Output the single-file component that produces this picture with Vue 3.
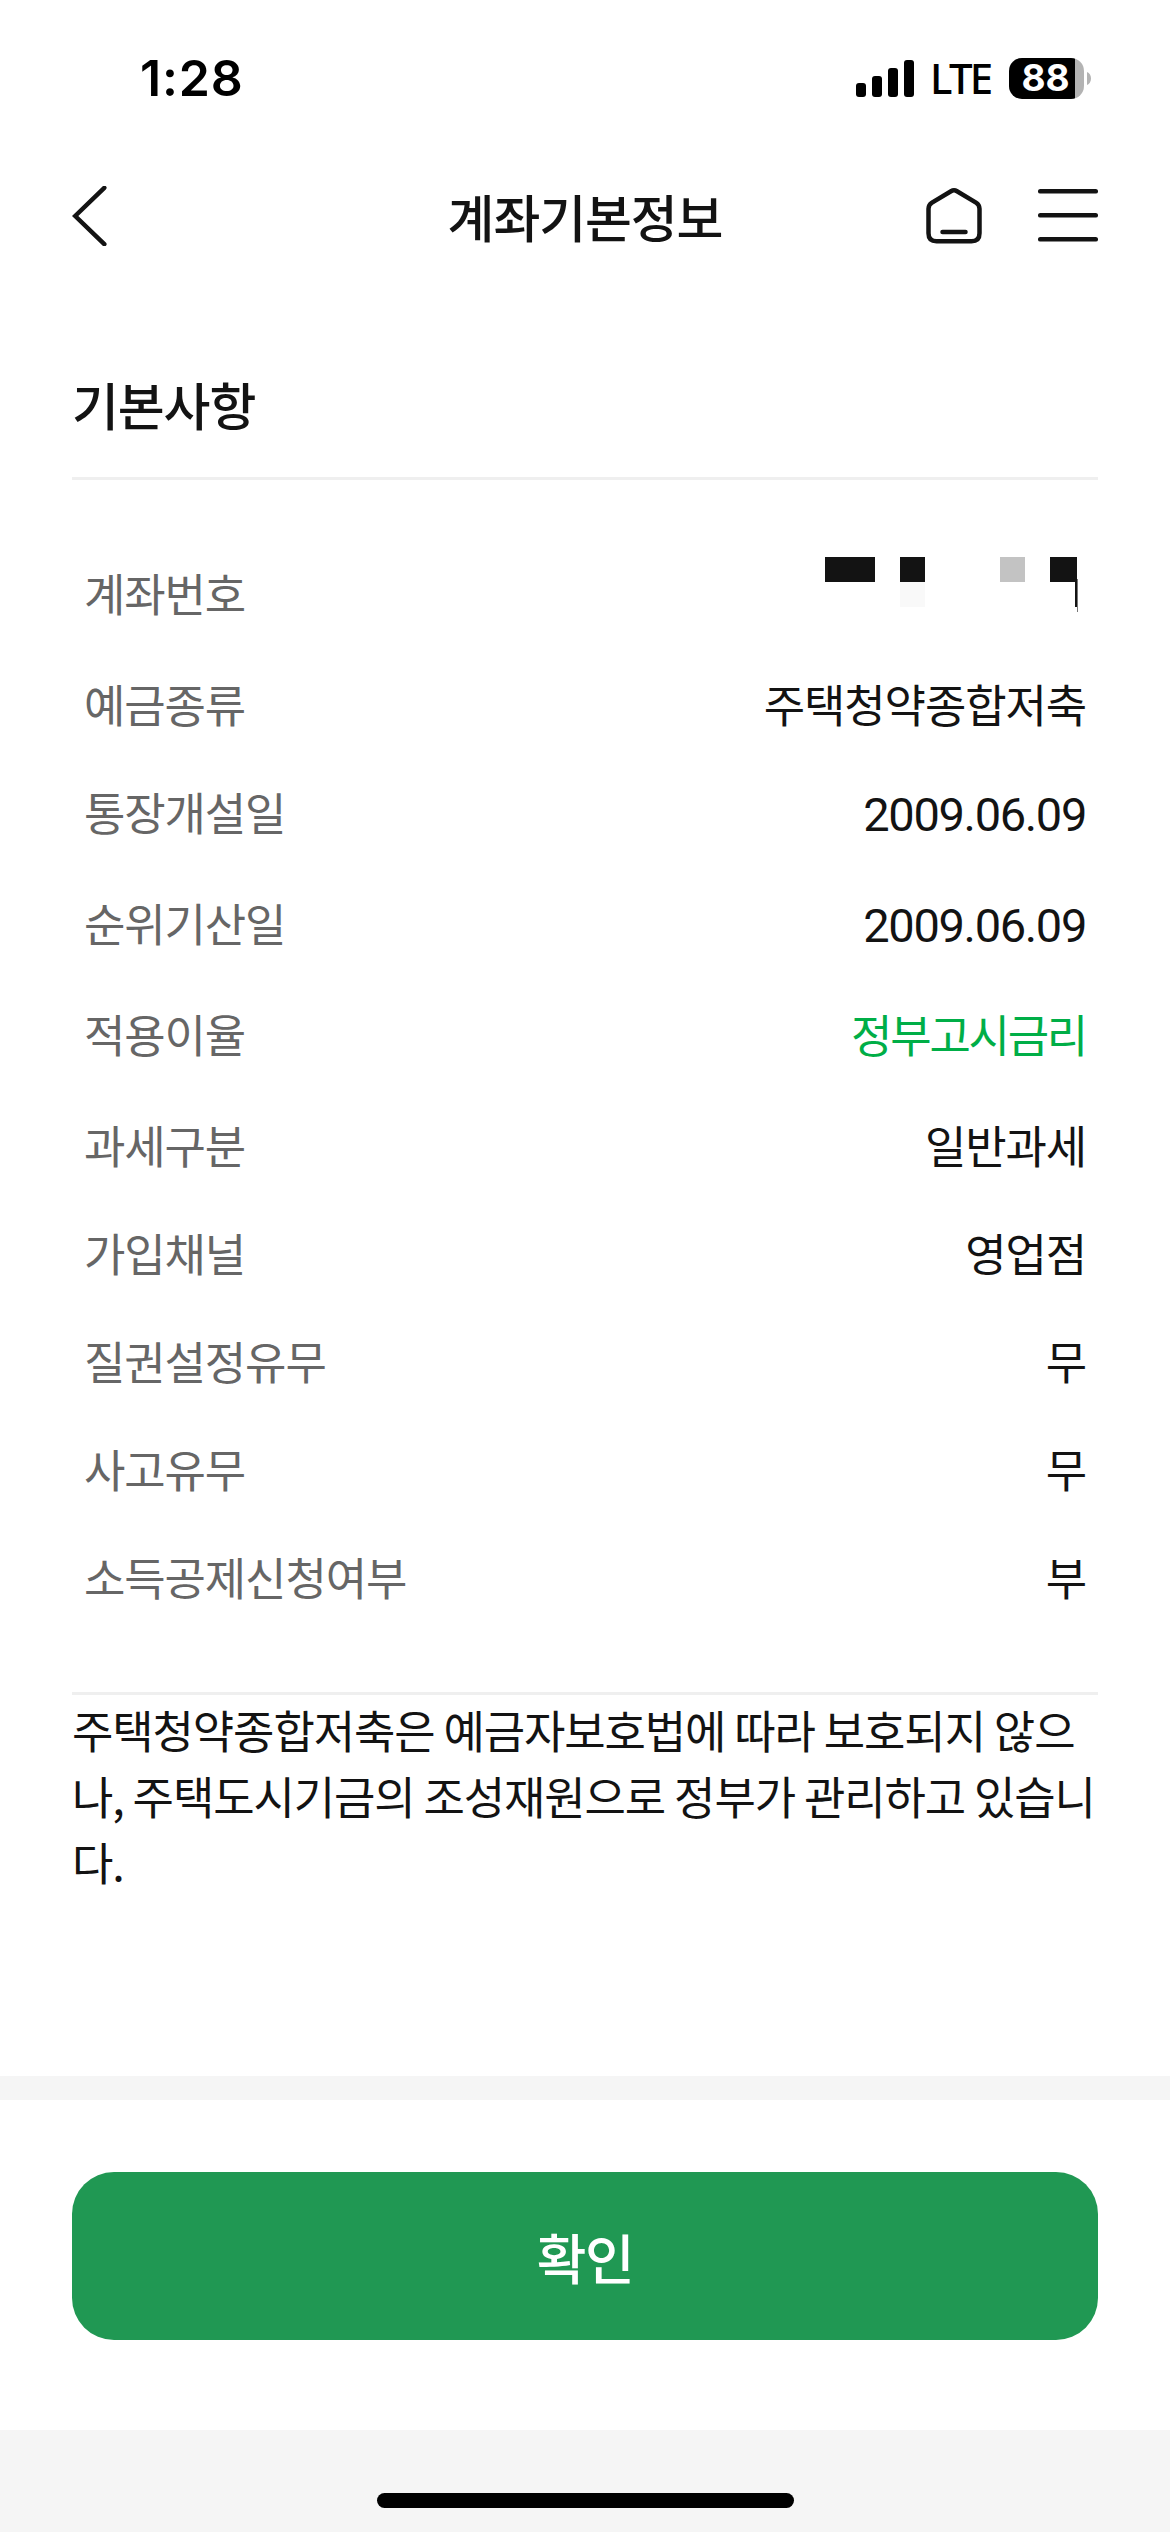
<template>
  <div class="screen">
    <div class="status-bar">
      <span class="status-time">1:28</span>
      <div class="status-right">
        <svg class="signal" width="58" height="37" viewBox="0 0 58 37">
          <rect x="0" y="23" width="10" height="14" rx="3" />
          <rect x="16" y="16" width="10" height="21" rx="3" />
          <rect x="32" y="8" width="10" height="29" rx="3" />
          <rect x="48" y="0" width="10" height="37" rx="3" />
        </svg>
        <span class="network">LTE</span>
        <div class="battery">
          <div class="battery-body">
            <span class="battery-text">88</span>
          </div>
          <svg width="4" height="13" viewBox="0 0 4 13">
            <path d="M0 0C2.6 1.2 4 3.6 4 6.5S2.6 11.8 0 13Z" fill="#b3b3b3" />
          </svg>
        </div>
      </div>
    </div>

    <header class="header">
      <button class="icon-btn" aria-label="이전">
        <svg width="36" height="60" viewBox="0 0 36 60">
          <path d="M32.3 1.8L3.2 30L32.3 58.2" />
        </svg>
      </button>
      <h1 class="header-title">계좌기본정보</h1>
      <div class="header-actions">
        <button class="icon-btn" aria-label="홈">
          <svg width="56" height="60" viewBox="0 0 56 60">
            <path
              d="M25 5.2Q28 3.4 31 5.2L50 16.6Q53.5 18.8 53.5 22.8V47.3Q53.5 55.3 45.5 55.3H10.5Q2.5 55.3 2.5 47.3V22.8Q2.5 18.8 6 16.6Z"
            />
            <path d="M16.5 46H39.5" />
          </svg>
        </button>
        <button class="icon-btn" aria-label="메뉴">
          <svg width="60" height="60" viewBox="0 0 60 60">
            <path d="M2.2 5.3H57.8M2.2 29.3H57.8M2.2 53.3H57.8" />
          </svg>
        </button>
      </div>
    </header>

    <main class="content">
      <h2 class="section-title">기본사항</h2>
      <ul class="info-list">
        <li v-for="item in items" :key="item.label" class="info-row" :class="{ tall: item.tall }">
          <span class="info-label">{{ item.label }}</span>
          <!-- 계좌번호 가림 처리 -->
          <svg v-if="item.masked" class="masked" width="261" height="55" viewBox="0 0 261 55" shape-rendering="crispEdges">
            <rect x="0" y="0" width="50" height="25" fill="#131313" />
            <rect x="75" y="0" width="25" height="25" fill="#131313" />
            <rect x="75" y="25" width="25" height="25" fill="#f9f9f9" />
            <rect x="175" y="0" width="25" height="25" fill="#c3c3c3" />
            <rect x="225" y="0" width="27" height="25" fill="#131313" />
            <rect x="250" y="25" width="2" height="25" fill="#131313" />
            <rect x="252" y="22" width="1" height="33" fill="#777" />
          </svg>
          <span v-else class="info-value" :class="item.type">{{ item.value }}</span>
        </li>
      </ul>
      <p class="notice">{{ notice }}</p>
    </main>

    <footer class="footer">
      <button class="confirm-btn">확인</button>
    </footer>
    <div class="home-area">
      <div class="home-indicator"></div>
    </div>
  </div>
</template>

<script setup>
const items = [
  { label: '계좌번호', masked: true, tall: true },
  { label: '예금종류', value: '주택청약종합저축' },
  { label: '통장개설일', value: '2009.06.09', type: 'date', tall: true },
  { label: '순위기산일', value: '2009.06.09', type: 'date', tall: true },
  { label: '적용이율', value: '정부고시금리', type: 'link', tall: true },
  { label: '과세구분', value: '일반과세' },
  { label: '가입채널', value: '영업점' },
  { label: '질권설정유무', value: '무' },
  { label: '사고유무', value: '무' },
  { label: '소득공제신청여부', value: '부' }
]

const notice =
  '주택청약종합저축은 예금자보호법에 따라 보호되지 않으나, 주택도시기금의 조성재원으로 정부가 관리하고 있습니다.'
</script>

<style>
body {
  margin: 0;
  background-color: #fff;
}
</style>

<style scoped>
.screen {
  display: flex;
  flex-direction: column;
  width: 1170px;
  height: 2532px;
  overflow: hidden;
  background-color: #fff;
  color: #131313;
  font-family: 'Noto Sans CJK KR', sans-serif;
  font-size: 45px;
  line-height: 66px;
  letter-spacing: -0.025em;
}

/* 상태바 */
.status-bar {
  display: flex;
  justify-content: space-between;
  box-sizing: border-box;
  height: 132px;
  padding: 48px 79px 0 140px;
  color: #000;
  font-family: Inter, sans-serif;
  letter-spacing: 0;
}

.status-time {
  height: 60px;
  line-height: 60px;
  font-size: 50px;
  font-weight: 600;
  letter-spacing: 0.8px;
}

.status-right {
  display: flex;
  align-items: center;
  height: 60px;
}

.network {
  width: 60px;
  margin: 0 19px 0 16px;
  font-family: 'Noto Sans', sans-serif;
  font-size: 42px;
  font-weight: 500;
  letter-spacing: -2.7px;
}

.battery {
  display: flex;
  align-items: center;
  gap: 3px;
}

.battery-body {
  display: flex;
  align-items: center;
  justify-content: center;
  box-sizing: border-box;
  width: 75px;
  height: 41px;
  padding-right: 2px;
  border-radius: 13px;
  background: linear-gradient(to right, #000 66px, #b3b3b3 66px);
}

.battery-text {
  color: #fff;
  font-size: 37px;
  font-weight: 700;
}

/* 헤더 */
.header {
  display: grid;
  grid-template-columns: 1fr auto 1fr;
  align-items: center;
  height: 168px;
  padding: 0 72px;
}

.header-title {
  margin: 0;
  font-size: 51px;
  font-weight: 500;
}

.header-actions {
  display: flex;
  justify-content: flex-end;
  gap: 56px;
}

.icon-btn {
  display: block;
  justify-self: start;
  padding: 0;
  border: none;
  background: none;
  cursor: pointer;
}

.icon-btn svg {
  display: block;
  fill: none;
  stroke: #131313;
  stroke-width: 4.5;
  stroke-linecap: round;
}

/* 본문 */
.content {
  flex: 1;
  padding: 0 72px;
}

.section-title {
  margin: 0;
  padding: 67px 0 35px;
  border-bottom: 3px solid #efefef;
  font-size: 51px;
  font-weight: 500;
  line-height: 75px;
}

.info-list {
  box-sizing: border-box;
  height: 1215px;
  margin: 0;
  padding: 80px 12px 0;
  border-bottom: 3px solid #efefef;
  list-style: none;
}

.info-row {
  display: flex;
  align-items: baseline;
  justify-content: space-between;
  height: 108px;
}

.info-row.tall {
  height: 111px;
}

.info-label {
  color: #666;
}

.info-value.date {
  font-family: Roboto, sans-serif;
  font-size: 47px;
  letter-spacing: -1.34px;
}

.info-value.link {
  color: #00ae47;
  letter-spacing: -0.05em;
}

.masked {
  align-self: flex-start;
  margin-top: -3px;
}

.notice {
  margin: 0;
  padding-top: 2px;
  word-break: break-all;
}

/* 하단 버튼 */
.footer {
  box-sizing: border-box;
  height: 354px;
  padding: 72px 72px 0;
  border-top: 24px solid #f5f5f5;
}

.confirm-btn {
  display: block;
  width: 100%;
  height: 168px;
  padding: 0;
  border: none;
  border-radius: 42px;
  background-color: #209853;
  color: #fff;
  font-family: inherit;
  font-size: 54px;
  font-weight: 500;
  letter-spacing: -0.025em;
  cursor: pointer;
}

.home-area {
  box-sizing: border-box;
  height: 102px;
  padding-top: 63px;
  background-color: #f5f5f5;
}

.home-indicator {
  width: 417px;
  height: 15px;
  margin: 0 auto;
  border-radius: 8px;
  background-color: #000;
}
</style>
